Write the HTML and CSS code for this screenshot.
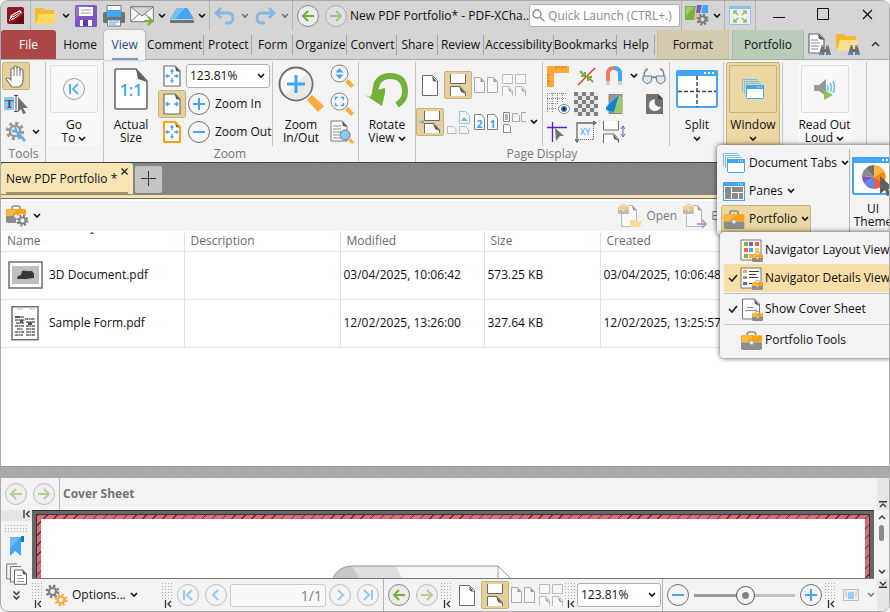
FILE: index.html
```
<!DOCTYPE html>
<html lang="en">

<head>
  <meta charset="UTF-8">
  <meta name="viewport" content="width=device-width, initial-scale=1.0">
  <title>New PDF Portfolio</title>
  <link rel="stylesheet" href="styles.css">
</head>

<body>
  <!-- Icons used more than once -->
  <svg class="sprite" aria-hidden="true">
    <symbol id="chev" viewBox="0 0 8 6"><path d="M1 1l3 3 3-3" fill="none" stroke="currentColor" stroke-width="1.600"/></symbol>
    <symbol id="arrow-left" viewBox="0 0 24 24"><circle cx="12" cy="12" r="10.5" fill="#ececec" stroke="#8a8a8a"/><path d="M18 12H7M12 7l-5 5 5 5" fill="none" stroke="#73b13a" stroke-width="2"/></symbol>
    <symbol id="arrow-right" viewBox="0 0 24 24"><circle cx="12" cy="12" r="10.5" fill="#ececec" stroke="#8a8a8a"/><path d="M6 12h11M12 7l5 5-5 5" fill="none" stroke="#73b13a" stroke-width="2"/></symbol>
    <symbol id="first" viewBox="0 0 24 24"><circle cx="12" cy="12" r="10.5" fill="#f5f5f5" stroke="#8a8a8a"/><path d="M8 7v10M16 7l-5 5 5 5" fill="none" stroke="#3fa0ee" stroke-width="2"/></symbol>
    <symbol id="prev" viewBox="0 0 24 24"><circle cx="12" cy="12" r="10.5" fill="#f5f5f5" stroke="#8a8a8a"/><path d="M14 7l-5 5 5 5" fill="none" stroke="#3fa0ee" stroke-width="2"/></symbol>
    <symbol id="plus" viewBox="0 0 24 24"><circle cx="12" cy="12" r="10.5" fill="#f5f5f5" stroke="#707070"/><path d="M12 6v12M6 12h12" fill="none" stroke="#42a5f5" stroke-width="2"/></symbol>
    <symbol id="minus" viewBox="0 0 24 24"><circle cx="12" cy="12" r="10.5" fill="#f5f5f5" stroke="#707070"/><path d="M6 12h12" fill="none" stroke="#42a5f5" stroke-width="2"/></symbol>
    <symbol id="page" viewBox="0 0 16 21"><path d="M.5.5h10l5 5v15H.5z" fill="#fff" stroke="#6a6a6a"/><path d="M10 1l5 6-4-1z" fill="#555"/></symbol>
    <symbol id="continuous" viewBox="0 0 18 22"><path d="M1.500 0v9.500h15V0z" fill="#fff"/><path d="M1.500 0v9.500h15V0" fill="none" stroke="#6a6a6a"/><path d="M1.500 22v-9.500H11l5.500 6V22z" fill="#fff"/><path d="M1.500 22v-9.500H11l5.500 6V22" fill="none" stroke="#6a6a6a"/><path d="M10 12l7 8-5-2z" fill="#555"/></symbol>
    <symbol id="two-pages" viewBox="0 0 24 16"><path d="M.5.5h6l4 4v11H.5zM13.500.5h6l4 4v11h-10z" fill="#f7f7f7" stroke="#aaa"/><path d="M6.500 1v4H10zM19.500 1v4H23z" fill="#999"/></symbol>
    <symbol id="four-pages" viewBox="0 0 24 22"><path d="M.5.5h10v9H.5zM13.500.5h10v9h-10zM.5 22v-9.500H7l3.500 4V22M13.500 22v-9.500H20l3.500 4V22" fill="#f7f7f7" stroke="#bbb"/><path d="M6 13l5 6-4-2zM19 13l5 6-4-2z" fill="#999"/></symbol>
    <symbol id="case" viewBox="0 0 20 18"><path d="M6 4V3q0-2 2-2h4q2 0 2 2v1" fill="none" stroke="#8d8d8d" stroke-width="1.500"/><rect y="4" width="20" height="7" rx="1.500" fill="#ffa20d"/><path d="M1 5h10L5 11H1z" fill="#ffb946"/><path d="M0 11h20v5q0 2-2 2H2q-2 0-2-2z" fill="#8d8d8d"/><circle cx="10" cy="11" r="2" fill="#eee" stroke="#aaa"/></symbol>
    <symbol id="gear" viewBox="0 0 20 20"><circle cx="10" cy="10" r="7.500" fill="none" stroke="currentColor" stroke-width="3.500" stroke-dasharray="3 2.890"/><circle cx="10" cy="10" r="4.800" fill="none" stroke="currentColor" stroke-width="3"/></symbol>
    <symbol id="windows" viewBox="0 0 22 20"><path d="M.5 13V.5H15M2.500 15V2.500H17M4.500 16V4.500H19" fill="none" stroke="#74bdf5"/><rect x="4.500" y="6.500" width="17" height="13" rx="1" fill="#fff" stroke="#42a5f5"/><path d="M4 6h18v4H4z" fill="#42a5f5"/><path d="M15 8h1M17 8h1M19 8h1" stroke="#fff"/></symbol>
    <symbol id="collapse" viewBox="0 0 7 8"><path d="M1 0v8M6.500 1L3.500 4l3 3" fill="none" stroke="#333" stroke-width="1.300"/></symbol>
    <symbol id="fit-page" viewBox="0 0 18 22"><path d="M1 1h11l5 5v15H1z" fill="#fff" stroke="#6a6a6a" stroke-width="1.200"/><path d="M12 1l5 6-4-1z" fill="#555"/><path d="M9 5v4M9 13v4M3 11h4M11 11h4M7.500 6.500L9 5l1.500 1.500M7.500 15.500L9 17l1.500-1.500M4.500 9.500L3 11l1.500 1.500M13.500 9.500L15 11l-1.500 1.500" fill="none" stroke="#42a5f5" stroke-width="1.300"/></symbol>
    <symbol id="binoculars" viewBox="0 0 12 11"><path d="M2 3h3v2h2V3h3l2 8H7V8H5v3H0z" fill="#707070"/><path d="M2 1h3v2H2zM7 1h3v2H7z" fill="#9a9a9a"/><path d="M0 10h4M8 10h4" stroke="#3fa0ee" stroke-width="1.500"/></symbol>
    <symbol id="tick" viewBox="0 0 10 8"><path d="M1 4l3 3 5-6" fill="none" stroke="#222" stroke-width="1.700"/></symbol>
  </svg>

  <header class="titlebar">
    <button class="tool" aria-label="Application"><svg width="17" height="17" viewBox="0 0 17 17"><rect width="17" height="17" rx="2" fill="#8e1620"/><path d="M17 7v10H5z" fill="#640c14"/><path d="M2 14l2-6 9-5 2 3-8 6z" fill="#fff"/><path d="M5 9l8-4M6 11l8-5M3 13l3-3" stroke="#8e1620"/></svg></button>
    <span class="sep"></span>
    <button class="tool" aria-label="Open"><svg width="23" height="18" viewBox="0 0 23 18"><path d="M0 1h8l2 2h9v14H2L0 15z" fill="#f6b92b"/><path d="M4 7h19l-5 10.500H1z" fill="#ffd966"/></svg></button>
    <button class="drop" aria-label="Open recent"><svg width="8" height="6"><use href="#chev"/></svg></button>
    <button class="tool" aria-label="Save"><svg width="22" height="22" viewBox="0 0 22 22"><rect width="22" height="22" rx="1.500" fill="#7e57c2"/><path d="M1 1h12L1 13z" fill="#9575cd"/><path d="M4 2h14v9H4zM5 15h12v6H5z" fill="#fff"/><path d="M6 5h10M6 8h10" stroke="#999"/><path d="M8 15h5v6H8z" fill="#5e3ba3"/></svg></button>
    <button class="tool" aria-label="Print"><svg width="22" height="22" viewBox="0 0 22 22"><rect y="7" width="22" height="11" rx="1.500" fill="#737373"/><path d="M4 .5h14V9H4z" fill="#fff" stroke="#777"/><path d="M4 5h14v7H4z" fill="#42a5f5"/><path d="M4.500 15h13v6h-13z" fill="#fff" stroke="#777"/><path d="M6 17h10M6 19h7" stroke="#42a5f5"/></svg></button>
    <button class="tool" aria-label="Send by e-mail"><svg width="24" height="20" viewBox="0 0 24 20"><path d="M.7.7h22.600v15H.7zM1 1l11 9L23 1M1 15l8-7M23 15l-8-7" fill="#fafafa" stroke="#777"/><path d="M14 15h8M18 11l4 4-4 4" fill="none" stroke="#73b13a" stroke-width="2"/></svg></button>
    <button class="drop" aria-label="E-mail options"><svg width="8" height="6"><use href="#chev"/></svg></button>
    <button class="tool" aria-label="Scan"><svg width="24" height="16" viewBox="0 0 24 16"><path d="M8 0h8q1 0 2 1l6 10H0L6 1q1-1 2-1z" fill="#42a5f5"/><path d="M8 0h7L5 11H0L6 1q1-1 2-1z" fill="#74bdf5"/><path d="M0 12h24v3H0z" fill="#737373"/></svg></button>
    <button class="drop" aria-label="Scan options"><svg width="8" height="6"><use href="#chev"/></svg></button>
    <span class="sep"></span>
    <button class="tool dim" aria-label="Undo"><svg width="22" height="18" viewBox="0 0 22 18"><path d="M2 6h12q5 0 5 5t-5 5h-3M7 1L2 6l5 5" fill="none" stroke="#3b9af0" stroke-width="2.800"/></svg></button>
    <button class="drop dim" aria-label="Undo list"><svg width="8" height="6"><use href="#chev"/></svg></button>
    <button class="tool dim" aria-label="Redo"><svg width="22" height="18" viewBox="0 0 22 18"><path d="M20 6H8q-5 0-5 5t5 5h3M15 1l5 5-5 5" fill="none" stroke="#3b9af0" stroke-width="2.800"/></svg></button>
    <button class="drop dim" aria-label="Redo list"><svg width="8" height="6"><use href="#chev"/></svg></button>
    <span class="sep"></span>
    <button class="tool" aria-label="Previous view"><svg width="24" height="24"><use href="#arrow-left"/></svg></button>
    <button class="tool dim" aria-label="Next view"><svg width="24" height="24"><use href="#arrow-right"/></svg></button>
    <h1 class="app-title">New PDF Portfolio* - PDF-XCha..</h1>
    <label class="search">
      <svg width="13" height="13" viewBox="0 0 13 13"><circle cx="5" cy="5" r="4" fill="none" stroke="#888" stroke-width="1.300"/><path d="M8 8l4.500 4.500" stroke="#888" stroke-width="1.300"/></svg>
      <input type="text" placeholder="Quick Launch (CTRL+.)" aria-label="Quick Launch">
    </label>
    <span class="sep"></span>
    <button class="tool" aria-label="UI options"><svg width="24" height="21" viewBox="0 0 24 21"><path d="M0 1h11L9 15H0z" fill="#7cb342"/><path d="M1 2h8L1 11z" fill="#9ccc65"/><path d="M12 0h5l-2 8h-4z" fill="#7e57c2"/><path d="M18 0h5v8h-7z" fill="#42a5f5"/><path d="M11 9h5l-2 6h-4z" fill="#ffa726"/><circle cx="17" cy="14" r="6" fill="#d4d4d4"/><g color="#777"><use href="#gear" x="11" y="8" width="13" height="13"/></g></svg></button>
    <button class="drop" aria-label="More UI options"><svg width="8" height="6"><use href="#chev"/></svg></button>
    <span class="sep"></span>
    <button class="tool" aria-label="Full screen"><svg width="22" height="19" viewBox="0 0 22 19"><rect x=".5" y=".5" width="21" height="18" rx="1" fill="#eee" stroke="#8fc0ea"/><path d="M0 0h22v3H0z" fill="#8fc0ea"/><path d="M5 8V5h3M5 5l4 4M17 8V5h-3M17 5l-4 4M5 13v3h3M5 16l4-4M17 13v3h-3M17 16l-4-4" fill="none" stroke="#8fbf6c" stroke-width="1.500"/></svg></button>
    <span class="sep"></span>
    <div class="window-buttons">
      <button aria-label="Minimize"><svg width="12" height="12" viewBox="0 0 12 12"><path d="M0 9.500h12" stroke="#111"/></svg></button>
      <button aria-label="Maximize"><svg width="12" height="12" viewBox="0 0 12 12"><path d="M.5.5h11v11H.5z" fill="none" stroke="#111"/></svg></button>
      <button aria-label="Close"><svg width="11" height="11" viewBox="0 0 11 11"><path d="M1 1l9 9M10 1l-9 9" stroke="#111" stroke-width="1.200"/></svg></button>
    </div>
  </header>

  <nav class="tabs">
    <button class="tab tab-file">File</button>
    <button class="tab">Home</button>
    <button class="tab tab-active">View</button>
    <button class="tab tab-line">Comment</button>
    <button class="tab tab-line">Protect</button>
    <button class="tab tab-line">Form</button>
    <button class="tab tab-line">Organize</button>
    <button class="tab tab-line">Convert</button>
    <button class="tab tab-line">Share</button>
    <button class="tab tab-line">Review</button>
    <button class="tab tab-line">Accessibility</button>
    <button class="tab tab-line">Bookmarks</button>
    <button class="tab tab-line">Help</button>
    <button class="tab tab-format">Format</button>
    <button class="tab tab-portfolio">Portfolio</button>
    <button class="tool" aria-label="Find"><svg width="23" height="22" viewBox="0 0 23 22"><path d="M1 1h10l5 5v14H1z" fill="#fff" stroke="#6a6a6a" stroke-width="1.200"/><path d="M10 1l6 6-5-1z" fill="#555"/><path d="M3 7h7M3 10h9M3 13h8M3 16h7" stroke="#888"/><use href="#binoculars" x="11" y="11" width="12" height="11"/></svg></button>
    <button class="tool" aria-label="Search"><svg width="24" height="22" viewBox="0 0 24 22"><path d="M0 1h8l2 2h10v14H2L0 15z" fill="#f6b92b"/><path d="M4 7h19l-5 10.500H1z" fill="#ffe08a"/><use href="#binoculars" x="12" y="11" width="12" height="11"/></svg></button>
    <button class="tool" aria-label="Collapse ribbon"><svg width="9" height="6" viewBox="0 0 9 6"><path d="M1 5l3.500-3.500L8 5" fill="none" stroke="#333" stroke-width="1.500"/></svg></button>
  </nav>

  <section class="ribbon">
    <div class="group group-tools">
      <div class="stack">
        <button class="tool selected" aria-label="Hand tool"><svg width="22" height="23" viewBox="0 0 22 23"><path d="M7 22q-3-4-6-8 1-2 4 0l1 1V5q0-2 1.500-2T9 5V2.500Q9 1 10.500 1T12 2.500V4q0-2 1.500-2T15 4v2q0-2 1.500-2T18 6v9q0 5-4 7z" fill="#fff" stroke="#777" stroke-width="1.200"/><path d="M9 5v6M12 4v7M15 5v6" stroke="#777"/></svg></button>
        <button class="tool" aria-label="Select text"><svg width="24" height="20" viewBox="0 0 24 20"><path d="M0 3h10v13H0z" fill="#8cc6f8"/><text x="1" y="14" class="glyph-t">T</text><path d="M12 2v15M10 1.500h4M10 17.500h4" stroke="#555"/><path d="M14 3l10 11h-5l3 5-3 1-2-5-3 3z" fill="#707070"/></svg></button>
        <div class="row">
          <button class="tool" aria-label="Tool settings"><svg width="23" height="23" viewBox="0 0 23 23"><g color="#999"><use href="#gear" width="20" height="20"/></g><circle cx="10" cy="10" r="4" fill="#f3f3f3"/><path d="M8 5l3 1 2 4 8 9-2 2-8-9-4-1-1-3 3 1 1-1z" fill="#5fb0f3"/></svg></button>
          <button class="drop" aria-label="More tools"><svg width="8" height="6"><use href="#chev"/></svg></button>
        </div>
      </div>
      <p class="caption">Tools</p>
    </div>

    <div class="group group-goto">
      <button class="big boxed">
        <span class="picture"><svg class="soft" width="24" height="24"><use href="#first"/></svg></span>
        <span>Go<br>To <svg width="8" height="6"><use href="#chev"/></svg></span>
      </button>
    </div>

    <div class="group group-zoom">
      <div class="row">
        <button class="big">
          <span class="picture"><svg width="34" height="42" viewBox="0 0 34 42"><path d="M1 2q0-1 1-1h20l11 12v27q0 1-1 1H2q-1 0-1-1z" fill="#fff" stroke="#6a6a6a" stroke-width="1.600"/><path d="M22 1l11 13-9-3z" fill="#606060"/><text x="17" y="28" class="glyph-ratio">1:1</text></svg></span>
          <span>Actual<br>Size</span>
        </button>
        <div class="stack">
          <button class="tool" aria-label="Fit page"><svg width="18" height="22"><use href="#fit-page"/></svg></button>
          <button class="tool selected" aria-label="Fit width"><svg width="18" height="22" viewBox="0 0 18 22"><path d="M1 1h11l5 5v15H1z" fill="#fff" stroke="#6a6a6a" stroke-width="1.200"/><path d="M12 1l5 6-4-1z" fill="#555"/><path d="M3 11h4M11 11h4M5 9l-2 2 2 2M13 9l2 2-2 2" fill="none" stroke="#42a5f5" stroke-width="1.300"/></svg></button>
          <button class="tool" aria-label="Fit visible"><svg width="18" height="22" viewBox="0 0 18 22"><use href="#fit-page"/><path d="M1 1h11l5 5v15H1z" fill="none" stroke="#ffa20d" stroke-width="2"/></svg></button>
        </div>
        <div class="stack zoom-fields">
          <span class="combo">
            <select aria-label="Zoom"><option>123.81%</option></select>
            <svg width="8" height="6"><use href="#chev"/></svg>
          </span>
          <button class="wide"><svg width="24" height="24"><use href="#plus"/></svg>Zoom In</button>
          <button class="wide"><svg width="24" height="24"><use href="#minus"/></svg>Zoom Out</button>
        </div>
        <span class="sep"></span>
        <button class="big">
          <span class="picture"><svg width="46" height="46" viewBox="0 0 46 46"><path d="M29 34l5-5 12 11-6 6z" fill="#ffa93a"/><circle cx="18" cy="18" r="16.500" fill="#f9f9f9" stroke="#707070" stroke-width="2"/><path d="M7 29L29 7q5 5 4.500 11Q33 33 18 33.500 12 33 7 29z" fill="#e9e9e9"/><path d="M18 9v18M9 18h18" stroke="#42a5f5" stroke-width="3"/></svg></span>
          <span>Zoom<br>In/Out</span>
        </button>
        <div class="stack">
          <button class="tool" aria-label="Dynamic zoom"><svg width="24" height="24" viewBox="0 0 24 24"><path d="M15 18l3-3 6 6-3 3z" fill="#ffa93a"/><circle cx="9.500" cy="9.500" r="8.500" fill="#f7f7f7" stroke="#808080"/><path d="M5.500 8.500L9.500 4l4 4.500zM5.500 10.500l4 4.500 4-4.500z" fill="#42a5f5"/></svg></button>
          <button class="tool" aria-label="Loupe"><svg width="24" height="24" viewBox="0 0 24 24"><path d="M15 18l3-3 6 6-3 3z" fill="#ffa93a"/><circle cx="9.500" cy="9.500" r="8.500" fill="#f7f7f7" stroke="#808080"/><path d="M5.500 8V5.500H8M11 5.500h2.500V8M5.500 11v2.500H8M11 13.500h2.500V11" fill="none" stroke="#42a5f5" stroke-width="1.300"/></svg></button>
          <button class="tool" aria-label="Pan and zoom"><svg width="24" height="24" viewBox="0 0 24 24"><path d="M1 1h11l5 5v15H1z" fill="#fff" stroke="#777"/><path d="M12 1l5 6-4-1z" fill="#555"/><path d="M3 6h8M3 9h8M3 12h8M3 15h6M3 18h8" stroke="#888"/><path d="M18 20l2-2 4 4-2 2z" fill="#ffa93a"/><circle cx="15" cy="15" r="5" fill="#8cc6f8" stroke="#777"/></svg></button>
        </div>
      </div>
      <p class="caption">Zoom</p>
    </div>

    <div class="group group-rotate">
      <button class="big">
        <span class="picture"><svg width="44" height="38" viewBox="0 0 44 38"><path d="M10 25q0-19 15-19t15 16q0 8-8 13" fill="none" stroke="#73b13a" stroke-width="6"/><path d="M0 25l5 2q3-6 6-7l9-2v5l-3 13z" fill="#73b13a"/></svg></span>
        <span>Rotate<br>View <svg width="8" height="6"><use href="#chev"/></svg></span>
      </button>
    </div>

    <div class="group group-display">
      <div class="row">
        <div class="layouts">
          <div class="row">
            <button class="tool" aria-label="Single page"><svg width="16" height="21"><use href="#page"/></svg></button>
            <button class="tool selected" aria-label="Continuous"><svg width="18" height="22"><use href="#continuous"/></svg></button>
            <button class="tool" aria-label="Two pages"><svg width="24" height="16"><use href="#two-pages"/></svg></button>
            <button class="tool" aria-label="Two pages continuous"><svg width="24" height="22"><use href="#four-pages"/></svg></button>
          </div>
          <div class="row">
            <button class="tool selected" aria-label="Show gaps"><svg width="22" height="22" viewBox="0 0 22 22"><use href="#continuous" x="4" width="18" height="22"/><path d="M0 11h4M3 9l2 2-2 2" fill="none" stroke="#42a5f5"/></svg></button>
            <button class="tool" aria-label="Cover page"><svg width="23" height="23" viewBox="0 0 23 23"><path d="M12.500.5h6l4 4v8h-10z" fill="#eef6fd" stroke="#8cc6f8"/><path d="M14 10l3-4 4 4z" fill="#8fc46a"/><path d="M.5 22.500v-7H6l3 3v4zM12.500 22.500v-7h6l3 3v4z" fill="none" stroke="#bbb"/></svg></button>
            <button class="tool" aria-label="Right to left"><svg width="24" height="17" viewBox="0 0 24 17"><path d="M.5.5h7l3 4v11H.5zM13.500.5h7l3 4v11h-10z" fill="#f7f7f7" stroke="#808080"/><text x="5.500" y="14" class="glyph-num">2</text><text x="18.500" y="14" class="glyph-num">1</text></svg></button>
            <button class="tool" aria-label="Flow pages"><svg width="23" height="21" viewBox="0 0 23 21"><path d="M.5.5h6v9h-6zM.5 12.500h5l2 2v6h-7z" fill="#fff" stroke="#888"/><path d="M9.500 1.500h5l2 2v6h-7zM23 .5h-4.500v9H23" fill="none" stroke="#aaa"/><path d="M2 3h3M2 5h3M2 7h3" stroke="#666"/></svg></button>
            <button class="drop" aria-label="More layouts"><svg width="8" height="6"><use href="#chev"/></svg></button>
          </div>
        </div>
        <span class="sep"></span>
        <div class="toggles">
          <button class="tool" aria-label="Rulers"><svg width="22" height="21" viewBox="0 0 22 21"><path d="M0 0h22v7H7v14H0z" fill="#ffa93a"/><path d="M9 0v3M12 0v2M15 0v3M18 0v2M0 9h3M0 12h2M0 15h3M0 18h2" stroke="#c47a17"/></svg></button>
          <button class="tool" aria-label="Snap"><svg width="19" height="19" viewBox="0 0 19 19"><path d="M1 18L18 1" stroke="#ef2b2b" stroke-width="1.300"/><path d="M3 4l4 4M8 5v4H4M16 15l-4-4M11 14v-4h4" fill="none" stroke="#73b13a" stroke-width="2"/></svg></button>
          <button class="tool" aria-label="Magnet"><svg width="18" height="20" viewBox="0 0 18 20"><path d="M3 19V8q0-6 6-6" fill="none" stroke="#f27b5b" stroke-width="4"/><path d="M9 2q6 0 6 6v11" fill="none" stroke="#42a5f5" stroke-width="4"/><path d="M1 15h4v4H1zM13 15h4v4h-4z" fill="#ccc"/></svg></button>
          <button class="drop" aria-label="Snap options"><svg width="8" height="6"><use href="#chev"/></svg></button>
          <button class="tool" aria-label="Reading view"><svg width="24" height="17" viewBox="0 0 24 17"><path d="M2 9q0-8 4-8M22 9q0-8-4-8M10 10q2-2 4 0" fill="none" stroke="#777" stroke-width="1.300"/><path d="M1 8h9l-1 6-4 2-4-3zM14 8h9v5l-4 3-4-2z" fill="#d5ecfb" stroke="#777"/></svg></button>

          <button class="tool" aria-label="Grid"><svg width="23" height="22" viewBox="0 0 23 22"><path d="M0 .5h19M0 5.500h19M0 10.500h12M0 15.500h10M.5 0v20M5.500 0v20M10.500 0v12M15.500 0v10" stroke="#888" stroke-dasharray="1 1"/><ellipse cx="17" cy="16" rx="5.500" ry="4.500" fill="#fff" stroke="#888"/><circle cx="17" cy="16" r="3" fill="#2f7dc0"/><circle cx="17" cy="16" r="1.400" fill="#111"/></svg></button>
          <button class="tool" aria-label="Transparency grid"><svg width="24" height="24" viewBox="0 0 24 24"><defs><pattern id="checker" width="8" height="8" patternUnits="userSpaceOnUse"><path d="M0 0h4v4H0zM4 4h4v4H4z" fill="#808080"/><path d="M4 0h4v4H4zM0 4h4v4H0z" fill="#e8e8e8"/></pattern></defs><path d="M0 0h24v24H0z" fill="url(#checker)"/></svg></button>
          <button class="tool" aria-label="Page colors"><svg width="17" height="20" viewBox="0 0 17 20"><path d="M3 .5h13v19H3z" fill="#999" stroke="#888"/><path d="M13 1L0 13v3l8 2z" fill="#0b86d4"/><path d="M13 1l3 2v16H8z" fill="#9fca62"/></svg></button>
          <span></span>
          <button class="tool" aria-label="Night mode"><svg width="17" height="20" viewBox="0 0 17 20"><path d="M0 0h12l5 5v15H0z" fill="#707070"/><path d="M12 0l5 5h-5z" fill="#444"/><path d="M9 5q-2 8 6 8-2 4-7 4-5-1-5-6 0-5 6-6z" fill="#fff"/></svg></button>

          <button class="tool" aria-label="Guides"><svg width="22" height="20" viewBox="0 0 22 20"><path d="M0 5.500h20M5.500 0v20" fill="none" stroke="#5a1be0" stroke-width="1.300"/><path d="M8 6l9 8h-4l-4 5z" fill="#707070"/></svg></button>
          <button class="tool" aria-label="Coordinates"><svg width="22" height="22" viewBox="0 0 22 22"><path d="M2 21V2h19M0 18l2 3 2-3M18 0l3 2-3 2" fill="none" stroke="#666" stroke-width="1.300"/><path d="M5 18.500h14M18.500 5v14" stroke="#666" stroke-dasharray="1 1"/><text x="5" y="14" class="glyph-xy">XY</text></svg></button>
          <button class="tool" aria-label="Line spacing"><svg width="23" height="22" viewBox="0 0 23 22"><path d="M.5 0v9h15V0M.5 22v-9H11l4.500 5v4" fill="#fff" stroke="#707070"/><path d="M10 13l6 7-5-2z" fill="#555"/><path d="M20 5v11M18 8l2-3 2 3M18 13l2 3 2-3" fill="none" stroke="#7e57c2"/></svg></button>
        </div>
      </div>
      <p class="caption">Page Display</p>
    </div>

    <div class="group group-split">
      <span class="sep"></span>
      <button class="big">
        <span class="picture"><svg width="42" height="38" viewBox="0 0 42 38"><rect x="1" y="1" width="40" height="36" rx="2" fill="#fff" stroke="#42a5f5" stroke-width="2"/><path d="M0 2q0-2 2-2h38q2 0 2 2v4H0z" fill="#42a5f5"/><path d="M28 3h2M32 3h2M36 3h2" stroke="#fff" stroke-width="2"/><path d="M21 6v31M2 21.500h38" stroke="#444" stroke-width="1.500" stroke-dasharray="4 2"/></svg></span>
        <span>Split<br><svg width="8" height="6"><use href="#chev"/></svg></span>
      </button>
    </div>

    <div class="group group-window">
      <button class="big boxed pressed">
        <span class="picture"><svg width="22" height="20"><use href="#windows"/></svg></span>
        <span>Window<br><svg width="8" height="6"><use href="#chev"/></svg></span>
      </button>
    </div>

    <div class="group group-read">
      <button class="big boxed">
        <span class="picture"><svg width="22" height="22" viewBox="0 0 22 22"><path d="M0 7h5l7-6v17l-7-5H0z" fill="#999"/><path d="M13 7q2 3 0 6M16 5q3 5 0 9M19 3q3 7 0 12" fill="none" stroke="#74bdf5" stroke-width="1.500"/><path d="M10 12l9 5-9 5z" fill="#8ac05e"/></svg></span>
        <span>Read Out<br>Loud <svg width="8" height="6"><use href="#chev"/></svg></span>
      </button>
    </div>
  </section>

  <div class="documents">
    <div class="document-tab">
      <span>New PDF Portfolio *</span>
      <button aria-label="Close tab"><svg width="7" height="7" viewBox="0 0 7 7"><path d="M.5.5l6 6M6.500.5l-6 6" stroke="#222" stroke-width="1.300"/></svg></button>
    </div>
    <button class="new-tab" aria-label="New tab"><svg width="15" height="15" viewBox="0 0 15 15"><path d="M7.500 0v15M0 7.500h15" stroke="#333"/></svg></button>
  </div>

  <main class="portfolio">
    <div class="portfolio-bar">
      <button class="tool" aria-label="Portfolio options"><svg width="23" height="22" viewBox="0 0 23 22"><use href="#case" width="20" height="18"/><circle cx="16" cy="15" r="6" fill="#f3f3f3"/><g color="#808080"><use href="#gear" x="10" y="9" width="13" height="13"/></g></svg></button>
      <button class="drop" aria-label="More portfolio options"><svg width="8" height="6"><use href="#chev"/></svg></button>
      <div class="file-actions">
        <button class="wide"><svg width="24" height="24" viewBox="0 0 24 24"><path d="M3.500 8v14.500h15V6l-4-4.500H10" fill="#fff" stroke="#888"/><path d="M14 1l5 6-4-1z" fill="#555"/><use href="#case" width="11" height="10"/><path d="M12 16h5l1 1h6l-2 6H12z" fill="#fbc94d"/></svg>Open</button>
        <button class="wide"><svg width="24" height="24" viewBox="0 0 24 24"><path d="M3.500 8v14.500h15V6l-4-4.500H10" fill="#fff" stroke="#888"/><path d="M14 1l5 6-4-1z" fill="#555"/><use href="#case" width="11" height="10"/><path d="M14 20h9M19 16l4 4-4 4" fill="none" stroke="#7e57c2" stroke-width="2"/></svg>Extract</button>
      </div>
    </div>
    <table class="files">
      <colgroup>
        <col class="col-name"><col class="col-description"><col class="col-date"><col class="col-size"><col>
      </colgroup>
      <thead>
        <tr><th class="sorted">Name</th><th>Description</th><th>Modified</th><th>Size</th><th>Created</th></tr>
      </thead>
      <tbody>
        <tr>
          <td><div class="file"><svg width="35" height="28" viewBox="0 0 35 28"><rect x="1" y="1" width="33" height="26" fill="#fff" stroke="#6f6f6f" stroke-width="1.500"/><path d="M4 5h27v18H4z" fill="#bfbfbf"/><path d="M9 17l1-2 3-1 1-4h10l2 3v4l-8 1h-8z" fill="#383838"/><path d="M15 10l9 1 1 3" stroke="#28553a" fill="none"/></svg>3D Document.pdf</div></td>
          <td></td><td>03/04/2025, 10:06:42</td><td>573.25 KB</td><td>03/04/2025, 10:06:48</td>
        </tr>
        <tr>
          <td><div class="file"><svg width="35" height="35" viewBox="0 0 35 35"><rect x="4" y=".7" width="26" height="33" fill="#fff" stroke="#6f6f6f" stroke-width="1.500"/><path d="M9 3h6M21 3h6" stroke="#bbb"/><path d="M7 11h9M7 14h10M17 13h10M8 17h8M18 16h9M7 20h9M18 20h9M9 23h6M18 23h9M7 26h9M18 26h9M7 29h8M18 29h9" stroke="#888" stroke-width="2" stroke-dasharray="3 .5 2 .5"/><path d="M7 10h5v2H7zM12 14h3v3h-3zM20 16h4v3h-4z" fill="#555"/></svg>Sample Form.pdf</div></td>
          <td></td><td>12/02/2025, 13:26:00</td><td>327.64 KB</td><td>12/02/2025, 13:25:57</td>
        </tr>
      </tbody>
    </table>
  </main>

  <div class="splitter"></div>

  <div class="cover-header">
    <button class="tool dim" aria-label="Previous file"><svg width="24" height="24"><use href="#arrow-left"/></svg></button>
    <button class="tool dim" aria-label="Next file"><svg width="24" height="24"><use href="#arrow-right"/></svg></button>
    <span class="sep"></span>
    <h2>Cover Sheet</h2>
    <div class="edge"><svg width="8" height="7" viewBox="0 0 8 7"><path d="M0 .7h8M1 6l3-3 3 3" fill="none" stroke="#333" stroke-width="1.400"/></svg></div>
  </div>

  <section class="viewer">
    <aside class="side">
      <div class="side-top"><svg width="7" height="8"><use href="#collapse"/></svg></div>
      <div class="dots"></div>
      <button aria-label="Bookmarks"><svg width="16" height="21" viewBox="0 0 16 21"><path d="M1 1h11v19l-5.500-5L1 20z" fill="#42a5f5"/><path d="M12 0h3v6h-3z" fill="#1976b8"/><path d="M1 1h10L1 13z" fill="#6cbaf7"/></svg></button>
      <button aria-label="Thumbnails"><svg width="21" height="22" viewBox="0 0 21 22"><path d="M11 1H.7v15H4M15 3.500H4.500V19H8" fill="none" stroke="#777"/><path d="M8.500 7h8l4 4v10.300h-12z" fill="#fff" stroke="#666"/><path d="M16 6l5 6-4-1z" fill="#555"/><path d="M11 12.500h5M11 15.500h7M11 18.500h7" stroke="#999"/></svg></button>
      <button aria-label="More panes"><svg width="7" height="9" viewBox="0 0 7 9"><path d="M.5.5l3 3 3-3M.5 5l3 3 3-3" fill="none" stroke="#333" stroke-width="1.500"/></svg></button>
    </aside>

    <div class="canvas">
      <div class="sheet">
        <div class="paper">
          <svg width="180" height="13" viewBox="0 0 180 13"><path d="M1 13Q7 1 20 1h143l3 12z" fill="#f5f5f5"/><path d="M1 13Q7 1 20 1h44l6 12z" fill="#dedede"/><path d="M1 13Q7 1 20 1l7 12z" fill="#c8c8c8"/><path d="M1 13Q7 1 20 1h146l12 12M166 1v12" fill="none" stroke="#999"/></svg>
        </div>
      </div>
    </div>

    <div class="scroll">
      <svg width="8" height="6" viewBox="0 0 8 6"><path d="M1 5l3-3 3 3" fill="none" stroke="#444" stroke-width="1.500"/></svg>
      <span class="scroll-thumb"></span>
      <svg class="scroll-down" width="8" height="6"><use href="#chev"/></svg>
    </div>

    <footer class="status">
      <span class="grip"><svg width="7" height="8"><use href="#collapse"/></svg></span>
      <button class="wide options"><svg width="23" height="23" viewBox="0 0 23 23"><g color="#808080"><use href="#gear" width="15" height="15"/></g><g color="#ffa93a"><use href="#gear" x="9" y="9" width="14" height="14"/></g></svg>Options... <svg width="8" height="6"><use href="#chev"/></svg></button>
      <span class="grip"><svg width="7" height="8"><use href="#collapse"/></svg></span>
      <button class="tool dim" aria-label="First page"><svg width="24" height="24"><use href="#first"/></svg></button>
      <button class="tool dim" aria-label="Previous page"><svg width="24" height="24"><use href="#prev"/></svg></button>
      <input class="page-number" type="text" value="1/1" aria-label="Page">
      <button class="tool dim" aria-label="Next page"><svg class="flip" width="24" height="24"><use href="#prev"/></svg></button>
      <button class="tool dim" aria-label="Last page"><svg class="flip" width="24" height="24"><use href="#first"/></svg></button>
      <span class="sep"></span>
      <button class="tool" aria-label="Previous view"><svg width="24" height="24"><use href="#arrow-left"/></svg></button>
      <button class="tool dim" aria-label="Next view"><svg width="24" height="24"><use href="#arrow-right"/></svg></button>
      <span class="grip"><svg width="7" height="8"><use href="#collapse"/></svg></span>
      <button class="tool" aria-label="Single page"><svg width="16" height="21"><use href="#page"/></svg></button>
      <button class="tool selected" aria-label="Continuous"><svg width="18" height="22"><use href="#continuous"/></svg></button>
      <button class="tool" aria-label="Two pages"><svg width="24" height="16"><use href="#two-pages"/></svg></button>
      <button class="tool" aria-label="Two pages continuous"><svg width="24" height="22"><use href="#four-pages"/></svg></button>
      <span class="grip"><svg width="7" height="8"><use href="#collapse"/></svg></span>
      <span class="combo">
        <select aria-label="Zoom level"><option>123.81%</option></select>
        <svg width="8" height="6"><use href="#chev"/></svg>
      </span>
      <span class="sep"></span>
      <button class="tool" aria-label="Zoom out"><svg width="24" height="24"><use href="#minus"/></svg></button>
      <input class="zoom-slider" type="range" min="0" max="100" value="51" aria-label="Zoom slider">
      <button class="tool" aria-label="Zoom in"><svg width="24" height="24"><use href="#plus"/></svg></button>
      <span class="grip"><svg width="7" height="8"><use href="#collapse"/></svg></span>
      <button class="tool dim" aria-label="Presentation"><svg width="16" height="12" viewBox="0 0 16 12"><path d="M.5.500h15v11H.5z" fill="#eee" stroke="#888"/><path d="M5 3h6v7H5z" fill="#42a5f5"/><path d="M2 3h2M2 5h2M2 7h2M12 3h2M12 5h2M12 7h2" stroke="#888"/></svg></button>
      <button class="drop dim" aria-label="More"><svg width="8" height="6"><use href="#chev"/></svg></button>
      <div class="edge edge-bottom"><svg width="8" height="7" viewBox="0 0 8 7"><path d="M0 6.300h8M1 1l3 3 3-3" fill="none" stroke="#333" stroke-width="1.400"/></svg></div>
    </footer>
  </section>

  <!-- Window drop-down -->
  <div class="popup">
    <div class="popup-list">
      <button class="wide"><svg width="22" height="20"><use href="#windows"/></svg>Document Tabs <svg width="8" height="6"><use href="#chev"/></svg></button>
      <button class="wide"><svg width="22" height="19" viewBox="0 0 22 19"><rect x=".5" y=".5" width="21" height="18" fill="#fff" stroke="#42a5f5"/><path d="M0 0h22v4H0z" fill="#42a5f5"/><path d="M15 2h1M17 2h1M19 2h1" stroke="#fff"/><path d="M2 5h6v12H2zM9 5h11v5H9zM9 11h6v6H9zM16 11h4v6h-4z" fill="#8a8a8a"/></svg>Panes <svg width="8" height="6"><use href="#chev"/></svg></button>
      <button class="wide pressed"><svg width="22" height="19" viewBox="0 0 20 18"><use href="#case"/></svg>Portfolio <svg width="8" height="6"><use href="#chev"/></svg></button>
    </div>
    <span class="sep"></span>
    <button class="big theme">
      <span class="picture"><svg width="42" height="39" viewBox="0 0 42 39"><rect x="1" y="1" width="40" height="36" rx="2" fill="#fff" stroke="#42a5f5" stroke-width="2"/><path d="M0 0h42v6H0z" fill="#42a5f5"/><path d="M30 3h2M34 3h2" stroke="#fff" stroke-width="2"/><g transform="translate(22 20)"><path d="M0 0V-12A12 12 0 0 1 10-6z" fill="#ffb33c"/><path d="M0 0l10-6A12 12 0 0 1 10 6z" fill="#fb8c00"/><path d="M0 0l10 6A12 12 0 0 1 0 12z" fill="#e85b4b"/><path d="M0 0v12A12 12 0 0 1-10 6z" fill="#5b8be0"/><path d="M0 0l-10 6A12 12 0 0 1-12-1z" fill="#7e57c2"/><path d="M0 0l-12-1A12 12 0 0 1-8-9z" fill="#8a8a8a"/><path d="M0 0l-8-9A12 12 0 0 1 0-12z" fill="#6f6f6f"/></g><path d="M28 19l14 13h-6l3 6-4 1-2-6-5 4z" fill="#606060"/></svg></span>
      <span>UI<br>Theme</span>
    </button>
  </div>

  <div class="menu">
    <button class="menu-item"><span class="mark"></span><svg width="23" height="23" viewBox="0 0 23 23"><path d="M1 1h20v20H1z" fill="#fff" stroke="#777"/><path d="M4 3h4v4H4z" fill="#7cb342"/><path d="M9 3h4v4H9z" fill="#7e57c2"/><path d="M15 3h4v4h-4z" fill="#e8644b"/><path d="M4 9h4v4H4z" fill="#e8644b"/><path d="M9 9h4v4H9z" fill="#42a5f5"/><path d="M15 9h4v4h-4z" fill="#ffc93c"/><path d="M4 15h4v4H4z" fill="#7cb342"/><path d="M9 15h4v4H9z" fill="#ffa93a"/><use href="#case" x="12" y="13" width="11" height="10"/></svg>Navigator Layout View</button>
    <button class="menu-item current"><span class="mark"><svg width="10" height="8"><use href="#tick"/></svg></span><svg width="23" height="23" viewBox="0 0 23 23"><path d="M1 1h20v20H1z" fill="#fff" stroke="#777"/><path d="M3 3h4v3H3z" fill="#ffa93a"/><path d="M3 9h4v3H3z" fill="#7cb342"/><path d="M3 15h4v3H3z" fill="#7e57c2"/><path d="M9 4.500h10M9 7.500h7M9 10.500h9M9 16.500h4" stroke="#444"/><use href="#case" x="12" y="13" width="11" height="10"/></svg>Navigator Details View</button>
    <hr>
    <button class="menu-item"><span class="mark"><svg width="10" height="8"><use href="#tick"/></svg></span><svg width="23" height="23" viewBox="0 0 23 23"><path d="M2.500 1h12l5 5v15h-17z" fill="#fff" stroke="#777"/><path d="M14 1l6 7-5-2z" fill="#555"/><path d="M7 9.500h6M5 12.500h12" stroke="#888"/><use href="#case" x="12" y="13" width="11" height="10"/></svg>Show Cover Sheet</button>
    <hr>
    <button class="menu-item"><span class="mark"></span><svg width="23" height="19" viewBox="0 0 20 18"><use href="#case"/></svg>Portfolio Tools</button>
  </div>
</body>

</html>
```
FILE: styles.css
```
/* General */
* {
  box-sizing: border-box;
}

body {
  margin: 0;
  height: 100vh;
  display: flex;
  flex-direction: column;
  position: relative;
  overflow: hidden;
  font-family: "Open Sans", "Noto Sans", sans-serif;
  font-size: 12px;
  line-height: 14px;
  color: #111;
  background-color: #f3f3f3;
  border: 1px solid #ababab;
  border-radius: 8px;
}

button,
input,
select {
  font: inherit;
  color: inherit;
}

button {
  padding: 0;
  border: 1px solid transparent;
  border-radius: 2px;
  background: none;
  white-space: nowrap;
}

h1,
h2,
p {
  margin: 0;
  font-size: 12px;
}

svg {
  flex: none;
}

.sprite {
  position: absolute;
  width: 0;
  height: 0;
}

.row {
  display: flex;
}

.stack {
  display: flex;
  flex-direction: column;
}

/* Small buttons */
.tool,
.drop {
  flex: none;
  width: 28px;
  height: 28px;
  display: flex;
  align-items: center;
  justify-content: center;
}

.drop {
  width: 12px;
}

.wide {
  height: 28px;
  display: flex;
  align-items: center;
  gap: 4px;
}

.dim {
  opacity: 0.5;
}

.soft {
  opacity: 0.8;
}

.flip {
  transform: scaleX(-1);
}

.selected {
  background-color: #e5d09c;
  border-color: #c9b27a;
}

.sep {
  flex: none;
  align-self: stretch;
  width: 1px;
  margin: 0 1px;
  background-color: #b5b5b5;
}

/* Title bar */
.titlebar {
  height: 29px;
  display: flex;
  align-items: center;
  background-color: #d4d4d4;
}

.app-title {
  flex: 1;
  white-space: nowrap;
  font-weight: normal;
}

.search {
  flex: none;
  width: 151px;
  height: 23px;
  display: flex;
  align-items: center;
  gap: 3px;
  padding: 0 2px;
  background-color: #fff;
  border: 1px solid #b0b0b0;
  border-radius: 3px;
}

.search input {
  width: 100%;
  min-width: 0;
  padding: 0;
  border: 0;
  outline: 0;
  background: none;
}

.search input::placeholder {
  color: #8a8a8a;
}

.window-buttons {
  display: flex;
}

.window-buttons button {
  width: 44px;
  height: 28px;
}

/* Ribbon tabs */
.tabs {
  height: 30px;
  display: grid;
  grid-template-columns: 55fr 48fr 41fr 59fr 48fr 41fr 54fr 50fr 40fr 46fr 70fr 63fr 38fr 75fr 75fr 29px 28px 27px;
  align-items: stretch;
  background-color: #d4d4d4;
  border-bottom: 1px solid #ababab;
}

.tab {
  min-width: 0;
  border: 0;
  border-radius: 0;
}

.tabs .tool {
  width: auto;
}

.tab-line {
  background: linear-gradient(#a5a5a5, #a5a5a5) right center / 1px 20px no-repeat;
}

.tab-file {
  color: #fff;
  background-color: #ad4747;
  border-radius: 3px 3px 0 0;
}

.tab-active {
  position: relative;
  margin-bottom: -1px;
  color: #1f4e79;
  background: linear-gradient(#7a9cc0, #7a9cc0) center bottom / 26px 2px no-repeat #f3f3f3;
  border-radius: 4px 4px 0 0;
  box-shadow: 0 0 2px #888;
}

.tab-format,
.tab-portfolio {
  margin: 0 1px 0 2px;
  background-color: #d3cbae;
  border: 1px dotted #cfb56a;
  border-width: 0 1px;
}

.tab-portfolio {
  background-color: #b9cbb9;
  border-color: #8cae8c;
}

/* Ribbon */
.ribbon {
  display: flex;
  height: 103px;
  padding-top: 2px;
  border-bottom: 1px solid #444;
}

.group {
  border-right: 1px solid #c4c4c4;
}

.group .sep {
  height: 84px;
  background-color: #c4c4c4;
}

.caption {
  line-height: 16px;
  text-align: center;
  color: #777;
}

.big {
  width: 54px;
  height: 84px;
  display: flex;
  flex-direction: column;
  align-items: center;
  line-height: 13px;
}

.picture {
  height: 51px;
  display: flex;
  align-items: center;
  justify-content: center;
  margin-bottom: 4px;
}

.boxed .picture {
  width: 48px;
  height: 48px;
  margin: 2px 0 5px;
  border: 1px solid #ddd;
  border-radius: 2px;
  background-color: #f8f8f8;
}

.boxed {
  background-color: #f8f8f8;
}

.boxed.pressed,
.pressed .picture,
.pressed {
  background-color: #ebd7a4;
  border-color: #c9b27a;
}

.group-tools {
  width: 45px;
  padding-left: 1px;
}

.group-goto {
  width: 58px;
  padding-left: 1px;
}

.group-zoom {
  padding-right: 2px;
}

.group-rotate {
  padding: 0 1px;
}

.group-display {
  border-right: 0;
}

.group-split {
  display: flex;
}

.group-split .big {
  width: 52px;
}

.group-window {
  padding: 0 2px;
}

.group-read {
  width: 84px;
  display: flex;
  justify-content: center;
}

.zoom-fields {
  width: 85px;
}

.combo {
  position: relative;
  width: 84px;
  height: 24px;
  margin: 2px 0;
}

.combo select {
  width: 100%;
  height: 100%;
  padding: 0 3px;
  appearance: none;
  background-color: #fff;
  border: 1px solid #b0b0b0;
  border-radius: 3px;
}

.combo svg {
  position: absolute;
  top: 9px;
  right: 5px;
  pointer-events: none;
}

.layouts {
  width: 125px;
  display: flex;
  flex-direction: column;
  gap: 9px;
  padding-top: 9px;
}

.toggles {
  display: grid;
  grid-template-columns: 28px 28px 28px 12px 28px;
  grid-auto-rows: 28px;
}

.glyph-t {
  font: bold 13px "Liberation Serif", serif;
  fill: #555;
}

.glyph-ratio {
  font: 16px "Open Sans", sans-serif;
  font-weight: 600;
  text-anchor: middle;
  fill: #42a5f5;
}

.glyph-num {
  font: bold 10px "Open Sans", sans-serif;
  text-anchor: middle;
  fill: #3fa0ee;
}

.glyph-xy {
  font: 9px "Open Sans", sans-serif;
  fill: #3fa0ee;
}

/* Document tabs */
.documents {
  height: 36px;
  display: flex;
  gap: 2px;
  padding-bottom: 4px;
  background-color: #848484;
  background-image: repeating-linear-gradient(45deg, #898989 0 1px, transparent 1px 3px);
  border-bottom: 1px solid #707070;
  box-shadow: inset 0 -3px #f8e3ae;
}

.document-tab {
  width: 132px;
  display: flex;
  align-items: flex-start;
  justify-content: space-between;
  padding: 5px 5px 0;
  background: linear-gradient(#a89468, #a89468) center 29px / 122px 2px no-repeat #f8e5b5;
  border-radius: 3px 3px 0 0;
}

.document-tab span {
  padding-top: 4px;
}

.document-tab button {
  line-height: 0;
  border: 0;
}

.new-tab {
  width: 27px;
  height: 27px;
  margin-top: 3px;
  background-color: #c4c4c4;
}

/* Portfolio list */
.portfolio {
  flex: 1;
  min-height: 0;
  background-color: #fff;
  border-top: 2px solid #fff;
}

.portfolio-bar {
  height: 30px;
  display: flex;
  align-items: center;
  padding-left: 2px;
  background-color: #f3f3f3;
}

.file-actions {
  display: flex;
  gap: 4px;
  margin-left: auto;
  margin-right: 138px;
  opacity: 0.55;
}

.files {
  width: 100%;
  table-layout: fixed;
  border-collapse: collapse;
}

.col-name {
  width: 183px;
}

.col-description {
  width: 156px;
}

.col-date {
  width: 144px;
}

.col-size {
  width: 116px;
}

.files th {
  height: 20px;
  padding: 0 6px;
  text-align: left;
  font-weight: normal;
  color: #6b6b6b;
}

.files td {
  height: 48px;
  padding: 0 3px;
}

.files th,
.files td {
  border: 1px solid #e2e2e2;
  border-width: 0 1px 1px 0;
}

.sorted {
  background: conic-gradient(from 135deg at 50% 0, #777 90deg, transparent 0) center top / 6px 3px no-repeat;
}

.file {
  display: flex;
  align-items: center;
  gap: 6px;
  padding-left: 4px;
}

.splitter {
  height: 12px;
  background-color: #a8a8a8;
  background-image: repeating-linear-gradient(45deg, #aeaeae 0 1px, transparent 1px 3px);
  border-top: 1px solid #999;
}

/* Cover sheet */
.cover-header {
  height: 32px;
  display: flex;
  align-items: center;
  padding-left: 1px;
}

.cover-header h2 {
  flex: 1;
  padding-left: 2px;
  color: #747474;
}

.edge {
  width: 12px;
  height: 32px;
  display: flex;
  align-items: flex-end;
  justify-content: center;
  padding-bottom: 2px;
  background-color: #e6e6e6;
}

.edge-bottom {
  align-items: flex-start;
  padding: 2px 0 0;
}

.viewer {
  height: 101px;
  display: grid;
  grid-template-columns: 31px 1fr 15px;
  grid-template-rows: 69px 32px;
}

.side {
  grid-row: span 2;
  display: flex;
  flex-direction: column;
  align-items: center;
  gap: 3px;
}

.side button {
  border: 0;
  line-height: 0;
}

.side button + button {
  margin-top: 3px;
}

.side-top {
  align-self: stretch;
  height: 11px;
  padding-right: 2px;
  line-height: 0;
  text-align: right;
  background-color: #e6e6e6;
}

.dots {
  width: 25px;
  height: 9px;
  background: radial-gradient(#aaa 1px, transparent 1px) 0 0 / 3px 3px;
}

.canvas {
  padding: 3px 4px 0;
  background-color: #666;
  border-top: 1px solid #333;
  border-bottom: 1px solid #777;
}

.sheet {
  height: 100%;
  padding: 4px 4px 0;
  border: 1px solid #333;
  border-bottom: 0;
  background: repeating-linear-gradient(135deg, #5a3438 0 1px, #dc6a72 1px 7px);
}

.paper {
  height: 100%;
  display: flex;
  align-items: flex-end;
  justify-content: center;
  padding-right: 63px;
  background-color: #fff;
}

.scroll {
  display: flex;
  flex-direction: column;
  align-items: center;
  padding: 4px 0;
  gap: 5px;
  color: #444;
}

.scroll-thumb {
  width: 5px;
  height: 16px;
  border-radius: 3px;
  background-color: #8a8a8a;
}

.scroll-down {
  margin-top: auto;
}

/* Status bar */
.status {
  grid-column: 2 / 4;
  display: flex;
  align-items: center;
}

.grip {
  flex: none;
  width: 12px;
  height: 26px;
  display: flex;
  align-items: flex-end;
  background: radial-gradient(#aaa 1px, transparent 1px) 2px 0 / 3px 3px;
}

.grip svg {
  width: 100%;
  background-color: #f3f3f3;
}

.options {
  flex: 1;
}

.page-number {
  width: 96px;
  height: 23px;
  margin: 0;
  padding: 0 3px;
  text-align: right;
  font-size: 14px;
  color: #8a7a80;
  background-color: #f8f8f8;
  border: 1px solid #ccc;
  border-radius: 3px;
}

.zoom-slider {
  width: 101px;
  height: 20px;
  margin: 0 2px;
  appearance: none;
  background: linear-gradient(90deg, #9a9a9a 50%, #c4c4c4 50%) center / 100% 3px no-repeat;
}

.zoom-slider::-webkit-slider-thumb {
  appearance: none;
  width: 19px;
  height: 19px;
  border: 1px solid #555;
  border-radius: 50%;
  background: radial-gradient(#808080 3px, #f6f6f6 4px);
}

/* Window popup and its menu */
.popup {
  position: absolute;
  top: 144px;
  right: -8px;
  width: 180px;
  height: 90px;
  display: flex;
  padding: 4px 0 0 4px;
  background-color: #f3f3f3;
  border-radius: 4px;
  box-shadow: 0 0 5px rgba(0, 0, 0, 0.7);
}

.popup-list {
  flex: none;
  width: 127px;
  display: flex;
  flex-direction: column;
  align-items: flex-start;
}

.popup-list .wide {
  padding: 0 1px;
}

.theme {
  flex: none;
  width: 44px;
  padding-top: 4px;
}

.theme .picture {
  height: 44px;
}

.menu {
  position: absolute;
  top: 231px;
  right: -8px;
  width: 177px;
  padding: 4px 8px 4px 4px;
  background-color: #f3f3f3;
  border-radius: 4px;
  box-shadow: 0 0 5px rgba(0, 0, 0, 0.7);
}

.menu-item {
  width: 100%;
  height: 28px;
  display: flex;
  align-items: center;
  gap: 2px;
}

.mark {
  flex: none;
  width: 13px;
  padding-left: 2px;
  line-height: 0;
}

.current {
  background-color: #f5dfa6;
}

.menu hr {
  margin: 1px 0;
  border: 0;
  border-top: 1px solid #c4c4c4;
}
```
